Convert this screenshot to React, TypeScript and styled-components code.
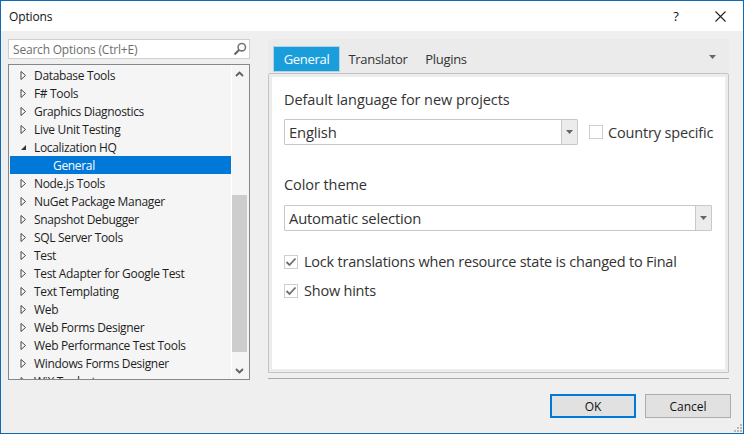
import React from "react";
import styled, { createGlobalStyle } from "styled-components";

const Global = createGlobalStyle`
  html, body { margin: 0; padding: 0; }
  body { width: 744px; height: 434px; overflow: hidden; background: #efefef; }
  * { box-sizing: border-box; }
`;

const Win = styled.div`
  width: 744px; height: 434px; display: flex; flex-direction: column;
  border: 1px solid #0f6cb4; background: #efefef;
  font-family: "Open Sans", "Noto Sans", sans-serif; color: #1e1e1e; overflow: hidden;
`;
const TitleBar = styled.div`
  height: 30px; flex: none; background: #fff; display: flex; align-items: center; padding-left: 8px;
  font-size: 12px; color: #111;
`;
const Title = styled.span` flex: 1; letter-spacing: -0.15px; `;
const Help = styled.span` width: 20px; margin-right: 11px; text-align: center; font-size: 13px; `;
const CloseBox = styled.span` width: 46px; display: flex; justify-content: center; `;

const Main = styled.div`
  height: 361px; flex: none; display: flex; padding: 8px 13px 0 7px;
`;
const Side = styled.div` width: 242px; flex: none; display: flex; flex-direction: column; gap: 5px; `;
const Search = styled.div`
  height: 20px; flex: none; background: #fff; border: 1px solid #ccced6; display: flex; align-items: center;
  justify-content: space-between; padding: 0 2px 0 4px; font-size: 12px; color: #6d6d6d; letter-spacing: -0.2px;
`;
const TreeBox = styled.div`
  height: 316px; flex: none; border: 1px solid #828790; background: #f5f5f5; display: flex; overflow: hidden;
`;
const Rows = styled.div` width: 222px; flex: none; padding: 1px 0 0 1px; `;
const Row = styled.div<{ $sel?: boolean; $child?: boolean }>`
  height: 18px; display: flex; align-items: center; font-size: 12px; letter-spacing: -0.33px; white-space: nowrap;
  padding-left: ${p => (p.$child ? 43 : 10)}px; width: 221px;
  background: ${p => (p.$sel ? "#0078d7" : "transparent")};
  color: ${p => (p.$sel ? "#fff" : "#1e1e1e")};
`;
const Arrow = styled.span` width: 14px; flex: none; display: flex; align-items: center; `;
const Scroll = styled.div`
  width: 17px; flex: none; border-left: 1px solid #fff; padding-right: 1px; display: flex; flex-direction: column;
  align-items: stretch; background: #f5f5f5;
`;
const ScrollBtn = styled.div<{ $h: number }>` height: ${p => p.$h}px; flex: none; display: flex; justify-content: center; align-items: center; `;
const Thumb = styled.div` height: 157px; flex: none; margin-top: 113px; background: #cdcdcd; `;
const Spacer = styled.div` flex: 1; `;

const Right = styled.div` margin-left: 18px; width: 461px; flex: none; display: flex; flex-direction: column; `;
const TabHead = styled.div`
  height: 34px; flex: none; background: #ebebeb; padding: 7px 13px 0 5px; display: flex; align-items: flex-start;
`;
const Tab = styled.div<{ $on?: boolean; $w: number }>`
  width: ${p => p.$w}px; height: 26px; font-size: 13px; display: flex; align-items: center; justify-content: center;
  letter-spacing: -0.3px;
  background: ${p => (p.$on ? "#1a9edb" : "transparent")};
  color: ${p => (p.$on ? "#fff" : "#333")};
  border: 1px solid ${p => (p.$on ? "#b4d4e6" : "transparent")};
`;
const TabArrow = styled.span` margin-left: auto; margin-top: 9px; display: flex; `;
const Panel = styled.div`
  height: 300px; flex: none; background: #fff; border: 1px solid #c4c4c4; border-top-left-radius: 2px; border-top-right-radius: 2px;
  box-shadow: inset 0 0 0 3px #ececec; padding: 16px 15px 0 15px; font-size: 14.5px; color: #333; letter-spacing: -0.15px;
`;
const Label = styled.div` height: 20px; line-height: 20px; letter-spacing: -0.07px; `;
const FieldRow = styled.div<{ $mt: number }>` display: flex; align-items: center; margin-top: ${p => p.$mt}px; `;
const Combo = styled.div<{ $w: number }>`
  width: ${p => p.$w}px; height: 26px; flex: none; border: 1px solid #c8c8c8; background: #fff; border-radius: 1px;
  display: flex; align-items: center; padding-left: 4px; color: #333;
`;
const ComboText = styled.span` flex: 1; font-size: 14.8px; letter-spacing: -0.2px; `;
const ComboBtn = styled.span`
  width: 16px; height: 24px; flex: none; background: #ececec; border-left: 1px solid #c8c8c8;
  display: flex; align-items: center; justify-content: center;
`;
const Box = styled.span`
  width: 14px; height: 14px; flex: none; border: 1px solid #cfcfcf; background: #fff;
  display: flex; align-items: center; justify-content: center;
`;
const Check = styled.div<{ $mt: number }>` display: flex; align-items: center; gap: 6px; margin-top: ${p => p.$mt}px; height: 20px; `;
const CheckText = styled.span` margin-bottom: 2px; letter-spacing: -0.22px; `;
const CountryCheck = styled.div` display: flex; align-items: center; gap: 5px; margin-left: 11px; white-space: nowrap; `;
const Section = styled(Label)` margin-top: 30px; `;
const Rule = styled.div` height: 1px; flex: none; background: #a8a8a8; margin-top: 5px; `;
const Footer = styled.div`
  flex: 1; display: flex; justify-content: flex-end; align-items: flex-start; gap: 9px; padding: 2px 12px 0 0; position: relative;
`;
const Btn = styled.div<{ $on?: boolean }>`
  width: 86px; height: 24px; display: flex; align-items: center; justify-content: center; font-size: 12px;
  background: #e1e1e1; color: #111; border: ${p => (p.$on ? "2px solid #0078d7" : "1px solid #adadad")};
`;
const Grip = styled.svg` position: absolute; right: 1px; bottom: 1px; `;

const TreeArrow = () => (
  <svg width="7" height="9" viewBox="0 0 7 9"><path d="M1 .5 L5.5 4.5 L1 8.5 Z" fill="#fff" stroke="#444" /></svg>
);
const OpenArrow = () => (
  <svg width="7" height="7" viewBox="0 0 7 7"><path d="M6 1 V6 H1 Z" fill="#333" /></svg>
);
const Caret = () => (
  <svg width="7" height="4" viewBox="0 0 7 4"><path d="M0 0 H7 L3.5 4 Z" fill="#666" /></svg>
);
const Tick = () => (
  <svg width="12" height="10" viewBox="0 0 12 10"><path d="M1.5 5 L4.5 8 L10.5 1.5" fill="none" stroke="#6e6e6e" strokeWidth="1.8" /></svg>
);
const Chevron = ({ up }: { up?: boolean }) => (
  <svg width="9" height="6" viewBox="0 0 9 6"><path d={up ? "M1 5 L4.5 1.5 L8 5" : "M1 1 L4.5 4.5 L8 1"} fill="none" stroke="#606060" strokeWidth="1.8" /></svg>
);

const items = [
  "Database Tools", "F# Tools", "Graphics Diagnostics", "Live Unit Testing", "Localization HQ", "General",
  "Node.js Tools", "NuGet Package Manager", "Snapshot Debugger", "SQL Server Tools", "Test",
  "Test Adapter for Google Test", "Text Templating", "Web", "Web Forms Designer",
  "Web Performance Test Tools", "Windows Forms Designer", "WiX Toolset",
];

export default function App() {
  return (
    <Win>
      <Global />
      <TitleBar>
        <Title>Options</Title>
        <Help>?</Help>
        <CloseBox>
          <svg width="11" height="11" viewBox="0 0 11 11"><path d="M.5 .5 L10.5 10.5 M10.5 .5 L.5 10.5" stroke="#222" strokeWidth="1.1" /></svg>
        </CloseBox>
      </TitleBar>
      <Main>
        <Side>
          <Search>
            <span>Search Options (Ctrl+E)</span>
            <svg width="14" height="14" viewBox="0 0 14 14">
              <circle cx="8.8" cy="5.2" r="3.7" fill="none" stroke="#777" strokeWidth="1.6" />
              <path d="M6 8 L1.5 12.5" stroke="#666" strokeWidth="2.2" />
            </svg>
          </Search>
          <TreeBox>
            <Rows>
              {items.map(t => (
                <Row key={t} $sel={t === "General"} $child={t === "General"}>
                  {t !== "General" && <Arrow>{t === "Localization HQ" ? <OpenArrow /> : <TreeArrow />}</Arrow>}
                  {t}
                </Row>
              ))}
            </Rows>
            <Scroll>
              <ScrollBtn $h={17}><Chevron up /></ScrollBtn>
              <Thumb />
              <Spacer />
              <ScrollBtn $h={17}><Chevron /></ScrollBtn>
            </Scroll>
          </TreeBox>
        </Side>
        <Right>
          <TabHead>
            <Tab $on $w={67}>General</Tab>
            <Tab $w={76}>Translator</Tab>
            <Tab $w={60}>Plugins</Tab>
            <TabArrow><Caret /></TabArrow>
          </TabHead>
          <Panel>
            <Label>Default language for new projects</Label>
            <FieldRow $mt={9}>
              <Combo $w={294}>
                <ComboText>English</ComboText>
                <ComboBtn><Caret /></ComboBtn>
              </Combo>
              <CountryCheck><Box />Country specific</CountryCheck>
            </FieldRow>
            <Section>Color theme</Section>
            <FieldRow $mt={10}>
              <Combo $w={428}>
                <ComboText>Automatic selection</ComboText>
                <ComboBtn><Caret /></ComboBtn>
              </Combo>
            </FieldRow>
            <Check $mt={21}><Box><Tick /></Box><CheckText>Lock translations when resource state is changed to Final</CheckText></Check>
            <Check $mt={9}><Box><Tick /></Box><CheckText>Show hints</CheckText></Check>
          </Panel>
          <Rule />
        </Right>
      </Main>
      <Footer>
        <Btn $on>OK</Btn>
        <Btn>Cancel</Btn>
        <Grip width="9" height="9" viewBox="0 0 9 9">
          <path d="M7 1h2v2H7zM4 4h2v2H4zM7 4h2v2H7zM1 7h2v2H1zM4 7h2v2H4zM7 7h2v2H7z" fill="#b8b8b8" />
        </Grip>
      </Footer>
    </Win>
  );
}
